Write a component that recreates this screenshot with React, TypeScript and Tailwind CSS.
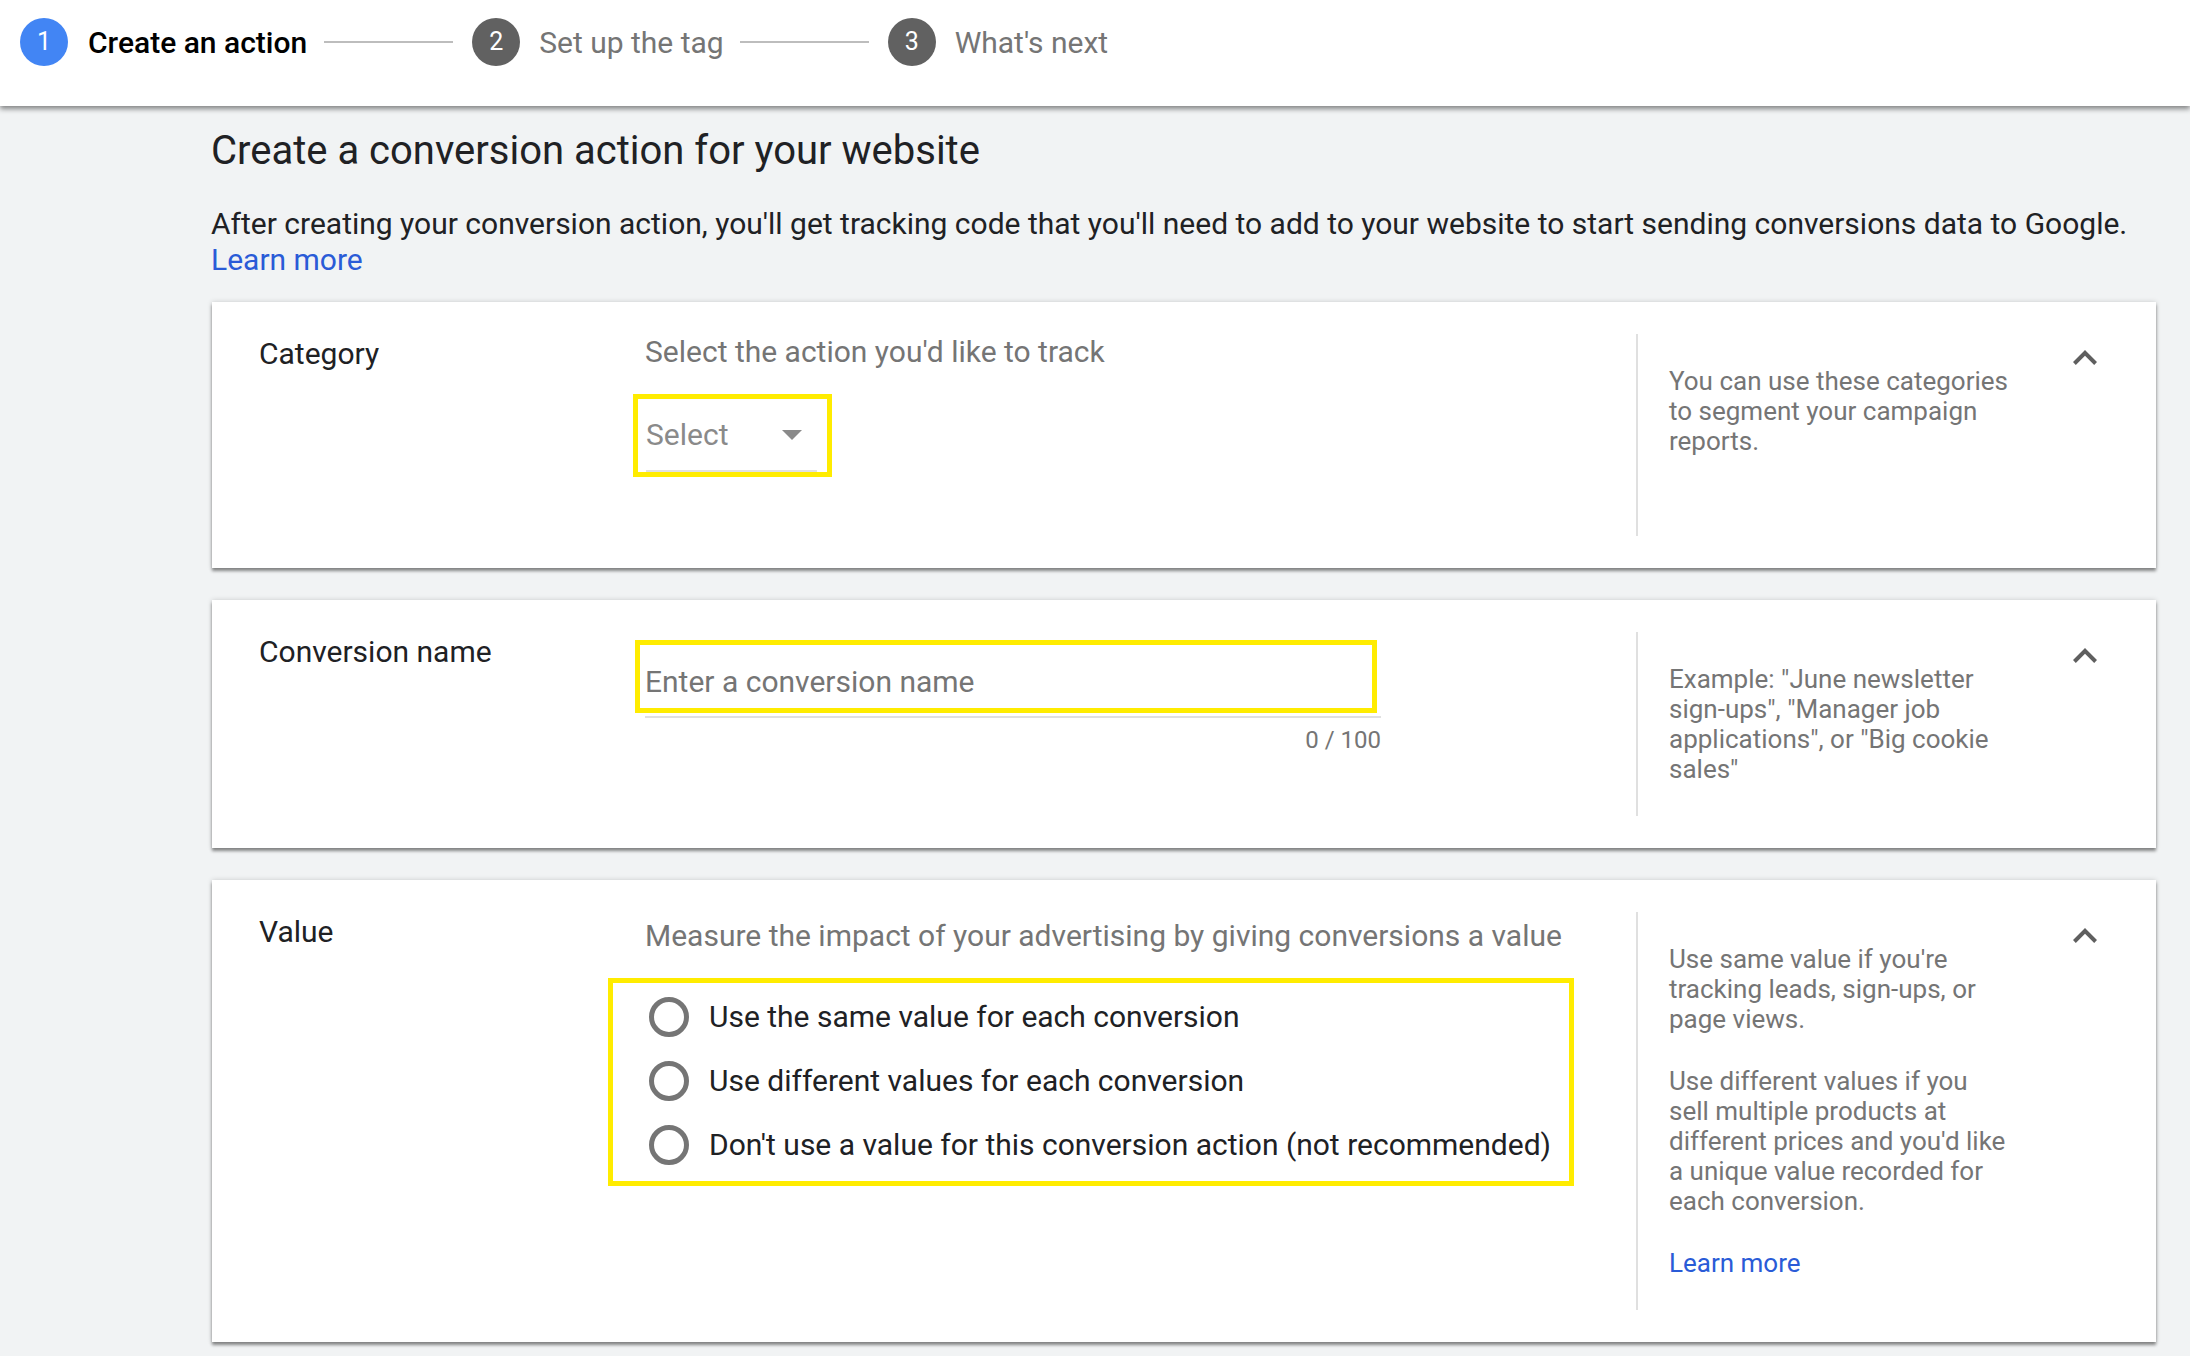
import React from "react";

function Step({ n, label, active }: { n: number; label: string; active?: boolean }) {
  return (
    <div className="flex items-center">
      <div className={active ? "flex h-12 w-12 items-center justify-center rounded-full bg-[#4285f4] text-[25px] text-white" : "flex h-12 w-12 items-center justify-center rounded-full bg-[#616161] text-[25px] text-white"}>
        {n}
      </div>
      <div className={active ? "ml-5 text-[30px] font-medium text-black" : "ml-[19px] text-[30px] text-[#757575]"}>{label}</div>
    </div>
  );
}

function Chevron() {
  return (
    <svg viewBox="6 8 12 7.41" className="mt-4 h-[15px] w-[24px] shrink-0 fill-[#5f5f5f]">
      <path d="M7.41 15.41L12 10.83l4.59 4.58L18 14l-6-6-6 6z" />
    </svg>
  );
}

function Card({ label, height, children, help }: { label: string; height: string; children: React.ReactNode; help: React.ReactNode }) {
  return (
    <section className={"flex bg-white py-8 shadow-[0_3px_3px_rgba(0,0,0,0.42),0_0_5px_rgba(0,0,0,0.16)] " + height}>
      <div className="w-[433px] shrink-0 pl-[47px] pt-[2px] text-[30px] leading-9 text-[#202124]">{label}</div>
      <div className="w-[991px] shrink-0">{children}</div>
      <div className="flex w-[520px] shrink-0 justify-between border-l-2 border-[#e0e0e0] pl-[31px] pr-[59px]">
        <div className="w-[342px] pt-8 text-[26px] leading-[30px] text-[#757575]">{help}</div>
        <Chevron />
      </div>
    </section>
  );
}

function Radio({ label }: { label: string }) {
  return (
    <div className="flex h-16 items-center">
      <div className="mt-[2px] h-10 w-10 shrink-0 rounded-full border-[5px] border-[#757575]" />
      <div className="ml-5 whitespace-nowrap text-[30px] text-[#202124]">{label}</div>
    </div>
  );
}

export default function App() {
  return (
    <div className="min-h-[1356px] w-[2190px] overflow-hidden bg-[#f1f3f4] font-['Roboto',sans-serif]">
      <header className="relative flex h-[106px] items-start bg-white pl-[20px] pt-[18px] shadow-[0_3px_5px_rgba(0,0,0,0.45)]">
        <Step n={1} label="Create an action" active />
        <div className="ml-[17px] mr-[19px] mt-[23px] h-[2px] w-[129px] bg-[#bdbdbd]" />
        <Step n={2} label="Set up the tag" />
        <div className="ml-[16px] mr-[19px] mt-[23px] h-[2px] w-[129px] bg-[#bdbdbd]" />
        <Step n={3} label="What's next" />
      </header>
      <main className="ml-[212px] w-[1944px]">
        <h1 className="-ml-px pt-5 text-[40px] leading-[50px] text-[#202124]">Create a conversion action for your website</h1>
        <p className="-ml-px mt-[30px] whitespace-nowrap text-[30px] leading-9 text-[#202124]">
          After creating your conversion action, you'll get tracking code that you'll need to add to your website to start sending conversions data to Google.
        </p>
        <a className="-ml-px block text-[30px] leading-9 text-[#2a5bd7]">Learn more</a>
        <div className="mt-6 flex flex-col gap-8">
          <Card label="Category" height="h-[266px]" help={<>You can use these categories to segment your campaign reports.</>}>
            <div className="text-[30px] leading-9 text-[#757575]">Select the action you'd like to track</div>
            <div className="-ml-3 mt-6 h-[83px] w-[199px] border-[5px] border-[#ffec00] pl-2">
              <div className="flex h-[73px] w-[171px] items-center justify-between border-b-2 border-[#e0e0e0] pr-[15px]">
                <span className="text-[30px] text-[#8a8a8a]">Select</span>
                <span className="h-0 w-0 border-x-[10px] border-t-[10px] border-x-transparent border-t-[#8a8a8a]" />
              </div>
            </div>
          </Card>
          <Card label="Conversion name" height="h-[248px]" help={<>Example: "June newsletter sign-ups", "Manager job applications", or "Big cookie sales"</>}>
            <div className="-ml-[10px] mt-2 flex h-[73px] w-[742px] items-center border-[5px] border-[#ffec00] pl-[5px] pt-[10px]">
              <span className="text-[30px] text-[#757575]">Enter a conversion name</span>
            </div>
            <div className="mt-[3px] h-[2px] w-[736px] bg-[#e0e0e0]" />
            <div className="mt-[8px] w-[736px] text-right text-[24px] leading-7 text-[#757575]">0 / 100</div>
          </Card>
          <Card
            label="Value"
            height="h-[462px]"
            help={
              <>
                <p>Use same value if you're tracking leads, sign-ups, or page views.</p>
                <p className="mt-8">Use different values if you sell multiple products at different prices and you'd like a unique value recorded for each conversion.</p>
                <p className="mt-8 text-[#2a5bd7]">Learn more</p>
              </>
            }
          >
            <div className="pt-[6px] text-[30px] leading-9 text-[#757575]">Measure the impact of your advertising by giving conversions a value</div>
            <div className="-ml-[37px] mt-[24px] h-[208px] w-[966px] border-[5px] border-[#ffec00] pl-[36px] pt-[1px]">
              <Radio label="Use the same value for each conversion" />
              <Radio label="Use different values for each conversion" />
              <Radio label="Don't use a value for this conversion action (not recommended)" />
            </div>
          </Card>
        </div>
      </main>
    </div>
  );
}
